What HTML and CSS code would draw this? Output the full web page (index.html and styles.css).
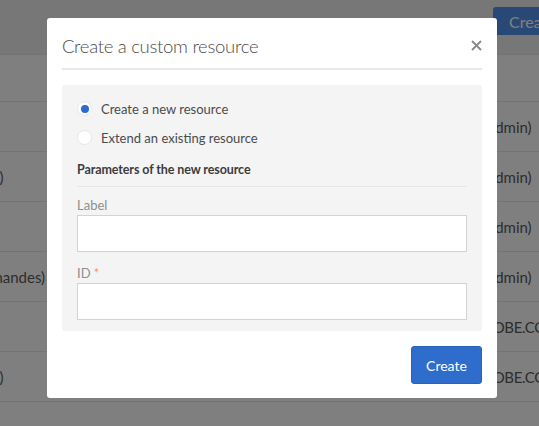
FILE: index.html
```html
<!DOCTYPE html>
<html lang="en">
<head>
  <meta charset="UTF-8" />
  <title>Custom resources</title>
  <link rel="stylesheet" href="styles.css">
</head>
<body>

  <div class="page">
    <header class="toolbar">
      <button class="top-btn">Create</button>
    </header>
    <div class="table">
      <div class="row head"></div>
      <div class="row"><span class="c1"></span><span class="c2">(admin)</span></div>
      <div class="row"><span class="c1 short">(Admin)</span><span class="c2">(admin)</span></div>
      <div class="row"><span class="c1"></span><span class="c2">(admin)</span></div>
      <div class="row"><span class="c1">(Commandes)</span><span class="c2">(admin)</span></div>
      <div class="row"><span class="c1"></span><span class="c2 mail">ADOBE.COM</span></div>
      <div class="row"><span class="c1 short">(Admin)</span><span class="c2 mail">ADOBE.COM</span></div>
      <div class="row"></div>
    </div>
  </div>

  <div class="backdrop">
    <div class="modal">
      <div class="modal-head">
        <h2>Create a custom resource</h2>
        <span class="close-btn" title="Close">
          <svg width="11" height="11" viewBox="0 0 11 11"><path d="M1 1L10 10M10 1L1 10" stroke="#888" stroke-width="1.8" fill="none"/></svg>
        </span>
      </div>
      <div class="panel">
        <label class="radio"><span class="dot checked"></span>Create a new resource</label>
        <label class="radio"><span class="dot"></span>Extend an existing resource</label>
        <div class="section-title">Parameters of the new resource</div>
        <div class="field-label">Label</div>
        <div class="input"></div>
        <div class="field-label">ID <span class="req">*</span></div>
        <div class="input"></div>
      </div>
      <div class="modal-foot">
        <button class="create-btn">Create</button>
      </div>
    </div>
  </div>

</body>
</html>
```

FILE: styles.css
```css
* {
  margin: 0;
  padding: 0;
  box-sizing: border-box;
}
body {
  font-family: Lato, 'Noto Sans', sans-serif;
  background: #fff;
  color: #4b4b4b;
  width: 539px;
  height: 426px;
  overflow: hidden;
}
.page {
  height: 426px;
  overflow: hidden;
}
.toolbar {
  height: 54px;
  background: #eeeeee;
  display: flex;
  justify-content: flex-end;
  align-items: flex-start;
  padding-top: 7px;
}
.top-btn {
  flex-shrink: 0;
  width: 70px;
  height: 28px;
  margin-right: -24px;
  background: #5190ec;
  color: #fff;
  border: none;
  border-radius: 3px;
  font: 16px Lato, sans-serif;
  text-align: left;
  padding-left: 16px;
}
.row {
  height: 50px;
  border-top: 1px solid #e6e6e6;
  display: flex;
  align-items: center;
  font-size: 15px;
  color: #5a5a5a;
  white-space: nowrap;
}
.row.head {
  height: 47px;
}
.c1 {
  flex-shrink: 0;
  margin-left: -44px;
  width: 528px;
}
.c1.short {
  margin-left: -47px;
  width: 531px;
}
.c2 {
  flex-shrink: 0;
  width: 90px;
}
.c2.mail {
  margin-left: -12px;
  letter-spacing: -0.4px;
}

.backdrop {
  position: fixed;
  top: 0;
  left: 0;
  width: 100%;
  height: 100%;
  background: rgba(0, 0, 0, 0.5);
  padding: 18px 0 0 47px;
}
.modal {
  width: 450px;
  height: 380px;
  background: #fff;
  border-radius: 3px;
  padding: 0 15px 15px;
}
.modal-head {
  height: 52px;
  border-bottom: 2px solid #e8e8e8;
  display: flex;
  justify-content: space-between;
  align-items: center;
  padding-top: 6px;
}
.modal-head h2 {
  font-size: 18.5px;
  letter-spacing: -0.3px;
  font-weight: 300;
  color: #4b4b4b;
}
.close-btn {
  display: flex;
  margin-top: -2px;
  cursor: pointer;
}
.panel {
  margin-top: 15px;
  background: #f4f4f4;
  border-radius: 3px;
  padding: 9px 15px 11px;
}
.radio {
  height: 29px;
  display: flex;
  align-items: center;
  gap: 9px;
  font-size: 13px;
  color: #4b4b4b;
}
.dot {
  width: 15px;
  height: 15px;
  border-radius: 50%;
  background: #fff;
  border: 1px solid #e6e6e6;
  display: flex;
  align-items: center;
  justify-content: center;
}
.dot.checked::after {
  content: "";
  width: 8px;
  height: 8px;
  border-radius: 50%;
  background: #2c6bd0;
}
.section-title {
  margin-top: 9px;
  padding-bottom: 7px;
  border-bottom: 1px solid #e6e6e6;
  font-size: 12.5px;
  letter-spacing: -0.1px;
  font-weight: bold;
  color: #3c3c3c;
  line-height: 18px;
}
.field-label {
  margin-top: 10px;
  margin-bottom: 2px;
  font-size: 13px;
  line-height: 16px;
  color: #8e8e8e;
}
.field-label + .input + .field-label {
  margin-top: 13px;
}
.req {
  color: #f29c4b;
}
.input {
  height: 37px;
  background: #fff;
  border: 1px solid #d3d3d3;
}
.modal-foot {
  display: flex;
  justify-content: flex-end;
  margin-top: 15px;
}
.create-btn {
  width: 71px;
  height: 38px;
  background: #2e6dcc;
  border: 1px solid #2a62b8;
  border-radius: 3px;
  color: #fff;
  font: 14px Lato, sans-serif;
}
```
